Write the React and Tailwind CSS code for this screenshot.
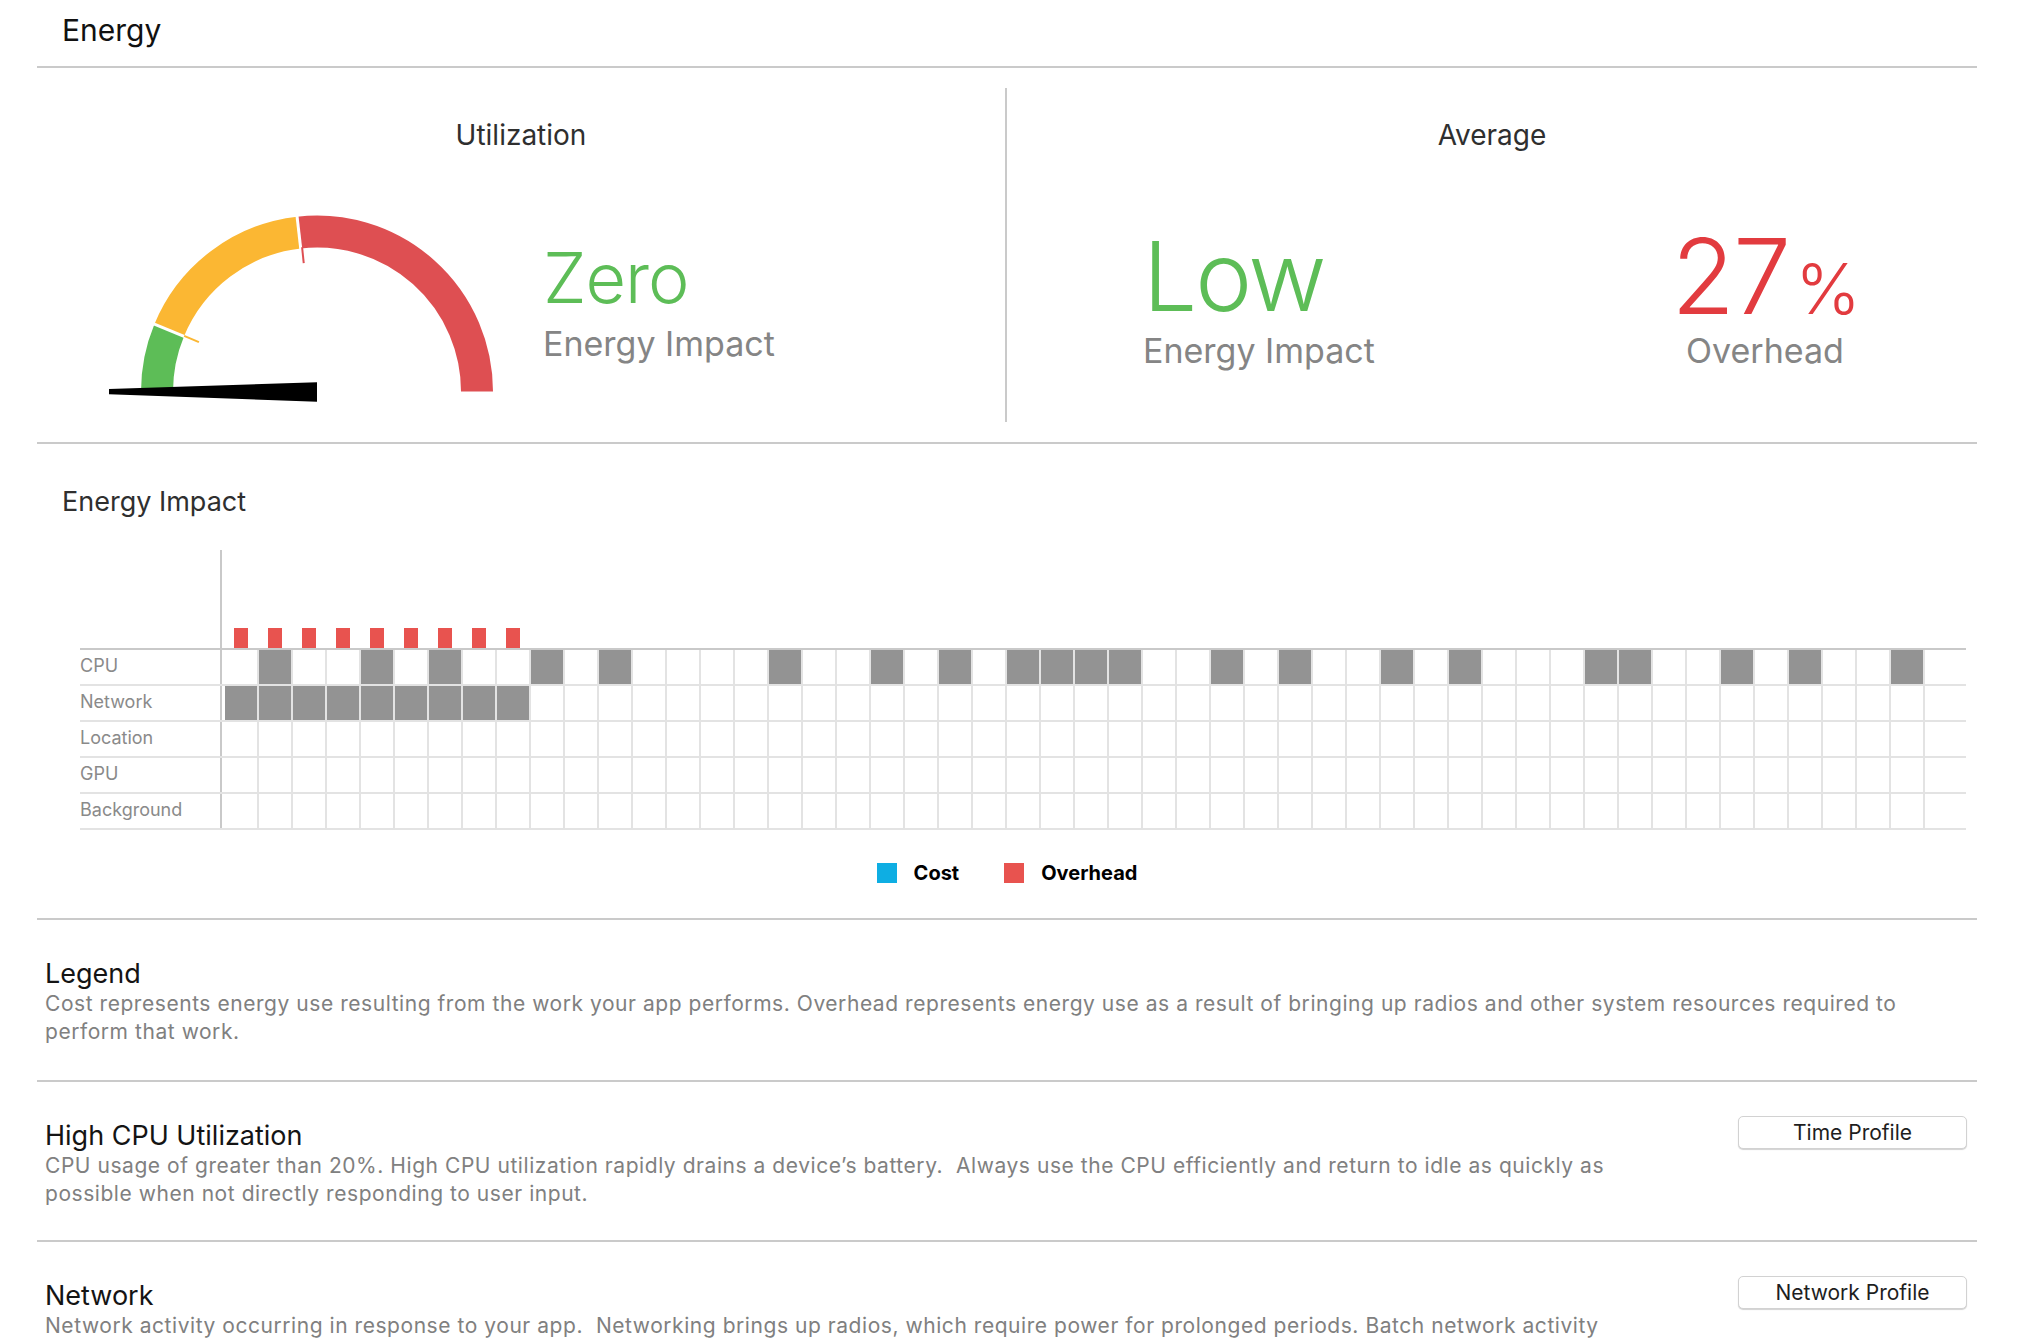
import React from 'react';

const CPU_COLS = [2, 5, 7, 10, 12, 17, 20, 22, 24, 25, 26, 27, 30, 32, 35, 37, 41, 42, 45, 47, 50];
const NET_COLS = [1, 2, 3, 4, 5, 6, 7, 8, 9];
const ROWS = [
    { label: 'CPU', on: CPU_COLS },
    { label: 'Network', on: NET_COLS },
    { label: 'Location', on: [] },
    { label: 'GPU', on: [] },
    { label: 'Background', on: [] },
];
const COLS = Array.from({ length: 50 }, (_, i) => i + 1);

const polar = (deg, r) => {
    const a = (deg * Math.PI) / 180;
    return [317 + r * Math.cos(a), 391.5 - r * Math.sin(a)];
};

const arc = (from, to, r) => {
    const [x1, y1] = polar(from, r);
    const [x2, y2] = polar(to, r);
    return `M ${x1} ${y1} A ${r} ${r} 0 0 1 ${x2} ${y2}`;
};

const tick = (deg, r1, r2) => {
    const [x1, y1] = polar(deg, r1);
    const [x2, y2] = polar(deg, r2);
    return { x1, y1, x2, y2 };
};

const Gauge = () => (
    <svg width="400" height="200" viewBox="100 205 400 200" className="block shrink-0">
        <path d={arc(180, 157.5, 160)} stroke="#5dbd57" strokeWidth="32" fill="none" />
        <path d={arc(157.5, 96.5, 160)} stroke="#fbb733" strokeWidth="32" fill="none" />
        <path d={arc(96.5, 0, 160)} stroke="#de4f52" strokeWidth="32" fill="none" />
        <line {...tick(157.5, 140, 180)} stroke="#fff" strokeWidth="3" />
        <line {...tick(96.5, 140, 180)} stroke="#fff" strokeWidth="3" />
        <line {...tick(157.3, 128, 144)} stroke="#fbb733" strokeWidth="2" />
        <line {...tick(95.9, 129, 145)} stroke="#de4f52" strokeWidth="2" />
        <polygon points="109,389 317,382.3 317,401.7 109,394.3" fill="#000" />
    </svg>
);

const Column = ({ first, line, children }) => (
    <div className={`flex shrink-0 ${first ? 'w-[35px] pl-[3px]' : 'w-[34px]'}`}>
        {!first && <div className={`w-[2px] ${line ? 'bg-[#e3e3e3]' : ''}`} />}
        <div className="w-[32px] flex justify-center items-end">{children}</div>
    </div>
);

const Section = ({ title, children, button }) => (
    <section className="flex justify-between border-t-2 border-[#cacaca] h-[160px] pl-[8px] pr-[10px]">
        <div className="pt-[38px] w-[1590px]">
            <h3 className="text-[27px] leading-[32px] text-[#141414]">{title}</h3>
            <p className="text-[21px] leading-[28px] tracking-[0.55px] text-[#808080]">{children}</p>
        </div>
        {button && (
            <button className="mt-[34px] w-[229px] h-[33px] rounded-[5px] border border-[#d2d2d2] bg-white shadow-[0_1px_1px_rgba(0,0,0,0.18)] text-[21px] text-[#1e1e1e]">
                {button}
            </button>
        )}
    </section>
);

export default function App() {
    return (
        <div className="w-[2042px] h-[1340px] overflow-hidden bg-white [font-family:Inter,'Liberation_Sans',sans-serif]">
            <div className="ml-[37px] w-[1940px]">
                <header className="h-[68px] border-b-2 border-[#cacaca] pl-[25px] pt-[12px]">
                    <h1 className="text-[30px] leading-[36px] text-[#111]">Energy</h1>
                </header>

                {/* Utilization / Average */}
                <section className="h-[376px] border-b-2 border-[#cacaca] flex">
                    <div className="w-[968px] pt-[50px]">
                        <h2 className="text-center text-[28px] leading-[34px] text-[#2f2f2f]">Utilization</h2>
                        <div className="flex items-start pl-[63px] pt-[53px]">
                            <Gauge />
                            <div className="ml-[43px] mt-[38px]">
                                <div className="text-[70px] leading-[70px] font-light tracking-[-1px] text-[#5dbd57]">Zero</div>
                                <div className="mt-[14px] text-[34px] leading-[34px] text-[#858585]">Energy Impact</div>
                            </div>
                        </div>
                    </div>
                    <div className="w-[2px] my-[20px] bg-[#cacaca]" />
                    <div className="flex-1 pt-[50px]">
                        <h2 className="text-center text-[28px] leading-[34px] text-[#2f2f2f]">Average</h2>
                        <div className="flex items-start pl-[136px]">
                            <div className="w-[472px] mt-[76px]">
                                <div className="text-[96px] leading-[96px] font-light tracking-[-2px] text-[#5dbd57]">Low</div>
                                <div className="mt-[10px] text-[34px] leading-[34px] text-[#858585]">Energy Impact</div>
                            </div>
                            <div className="w-[300px] mt-[72px] text-center">
                                <div className="h-[104px] text-[104px] leading-[104px] font-light tracking-[-2px] text-[#e23b3f]">
                                    27<span className="ml-[6px] text-[70px] leading-none">%</span>
                                </div>
                                <div className="mt-[6px] text-[34px] leading-[34px] text-[#858585]">Overhead</div>
                            </div>
                        </div>
                    </div>
                </section>

                {/* Energy Impact chart */}
                <section className="h-[476px] border-b-2 border-[#cacaca] pt-[40px]">
                    <h2 className="pl-[25px] text-[27px] leading-[36px] text-[#2f2f2f]">Energy Impact</h2>
                    <div className="ml-[43px] w-[1886px] mt-[30px]">
                        <div className="flex h-[98px]">
                            <div className="w-[140px]" />
                            <div className="flex border-l-2 border-[#c9c9c9] flex-1">
                                {COLS.map((c) => (
                                    <Column key={c} first={c === 1}>
                                        {c <= 9 && <div className="w-[14px] h-[20px] bg-[#e8534f]" />}
                                    </Column>
                                ))}
                            </div>
                        </div>
                        {ROWS.map((row, i) => (
                            <div
                                key={row.label}
                                className={`flex border-t-2 ${i === 0 ? 'border-[#c9c9c9] h-[36px]' : 'border-[#e3e3e3] h-[36px]'} ${i === ROWS.length - 1 ? 'border-b-2 border-b-[#e3e3e3] h-[38px]' : ''}`}
                            >
                                <div className="w-[140px] text-[18px] leading-[32px] text-[#8a8a8a]">{row.label}</div>
                                <div className="flex flex-1 border-l-2 border-[#c9c9c9]">
                                    {COLS.map((c) => (
                                        <Column key={c} first={c === 1} line>
                                            {row.on.includes(c) && <div className="w-[32px] h-[34px] bg-[#939393]" />}
                                        </Column>
                                    ))}
                                    <div className="w-[2px] bg-[#e3e3e3]" />
                                </div>
                            </div>
                        ))}
                    </div>
                    <div className="mt-[28px] flex justify-center items-center gap-[45px] text-[20px] font-bold text-black">
                        <div className="flex items-center gap-[17px]">
                            <span className="w-[20px] h-[20px] bg-[#0eaee3]" />
                            Cost
                        </div>
                        <div className="flex items-center gap-[17px]">
                            <span className="w-[20px] h-[20px] bg-[#e8534f]" />
                            Overhead
                        </div>
                    </div>
                </section>

                <section className="h-[160px] pl-[8px] pt-[38px]">
                    <h3 className="text-[27px] leading-[32px] text-[#141414]">Legend</h3>
                    <p className="text-[21px] leading-[28px] tracking-[0.55px] text-[#808080] w-[1910px]">
                        Cost represents energy use resulting from the work your app performs. Overhead represents energy use as a result of bringing up radios and other system resources required to perform that work.
                    </p>
                </section>

                <Section title="High CPU Utilization" button="Time Profile">
                    CPU usage of greater than 20%. High CPU utilization rapidly drains a device’s battery.&nbsp; Always use the CPU efficiently and return to idle as quickly as possible when not directly responding to user input.
                </Section>

                <Section title="Network" button="Network Profile">
                    Network activity occurring in response to your app.&nbsp; Networking brings up radios, which require power for prolonged periods. Batch network activity whenever possible to reduce overhead.
                </Section>
            </div>
        </div>
    );
}
